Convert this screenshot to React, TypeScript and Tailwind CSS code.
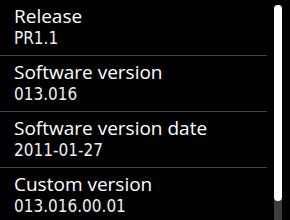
const items = [
  { title: "Release", value: "PR1.1" },
  { title: "Software version", value: "013.016" },
  { title: "Software version date", value: "2011-01-27" },
  { title: "Custom version", value: "013.016.00.01" },
];

export default function App() {
  return (
    <div
      className="relative w-[290px] h-[220px] overflow-hidden bg-black text-white"
      style={{ fontFamily: '"Open Sans", "Noto Sans", sans-serif' }}
    >
      <div className="w-[267px]">
        {items.map((it, i) => (
          <div key={i} className={`h-[56px] pl-[14px] pt-[4px] ${i < items.length - 1 ? "border-b border-[#444444]" : ""}`}>
            <div className="text-[19px] leading-[24px]">{it.title}</div>
            <div
              className="text-[17px] leading-[21px] text-[#f0f0f0]"
              style={{ fontFamily: '"Liberation Sans Narrow", "DejaVu Sans Condensed", sans-serif' }}
            >
              {it.value}
            </div>
          </div>
        ))}
      </div>
      <div className="absolute right-[8px] top-[5px] w-[8px] h-[240px] rounded-full bg-[#3d3d3d]">
        <div className="w-[8px] h-[196px] rounded-full bg-white" />
      </div>
    </div>
  );
}
